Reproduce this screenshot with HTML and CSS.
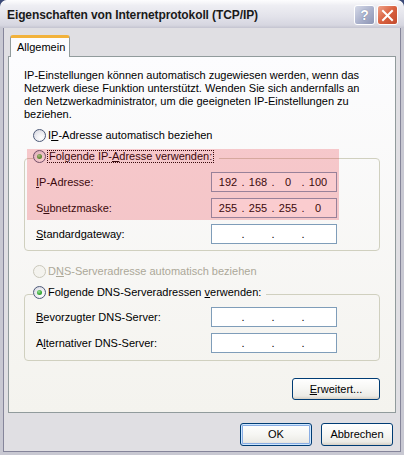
FILE: index.html
```html
<!DOCTYPE html>
<html lang="de">
<head>
<meta charset="utf-8">
<title>Eigenschaften von Internetprotokoll (TCP/IP)</title>
<link rel="stylesheet" href="styles.css">
</head>
<body>
<div class="window">
  <div class="titlebar">
    <span class="title">Eigenschaften von Internetprotokoll (TCP/IP)</span>
    <span class="tbtn help">?</span>
    <span class="tbtn close"><svg width="13" height="13" viewBox="0 0 13 13"><path d="M2 2 L11 11 M11 2 L2 11" stroke="#fff" stroke-width="2" stroke-linecap="square" fill="none"/></svg></span>
  </div>
  <div class="body">
    <div class="tabs"><div class="tab">Allgemein</div></div>
    <div class="panel">
      <div class="mark"></div>
      <p class="intro">IP-Einstellungen können automatisch zugewiesen werden, wenn das<br>Netzwerk diese Funktion unterstützt. Wenden Sie sich andernfalls an<br>den Netzwerkadministrator, um die geeigneten IP-Einstellungen zu<br>beziehen.</p>
      <div class="opt"><span class="radio"></span><span class="otext">I<u>P</u>-Adresse automatisch beziehen</span></div>
      <fieldset class="group">
        <legend class="opt"><span class="radio on"></span><span class="otext focus">Folgende IP-<u>A</u>dresse verwenden:</span></legend>
        <div class="rows">
          <div class="row"><span class="lbl"><u>I</u>P-Adresse:</span><span class="ip"><span>192</span><i>.</i><span>168</span><i>.</i><span>0</span><i>.</i><span>100</span></span></div>
          <div class="row"><span class="lbl">S<u>u</u>bnetzmaske:</span><span class="ip"><span>255</span><i>.</i><span>255</span><i>.</i><span>255</span><i>.</i><span>0</span></span></div>
          <div class="row"><span class="lbl"><u>S</u>tandardgateway:</span><span class="ip"><span></span><i>.</i><span></span><i>.</i><span></span><i>.</i><span></span></span></div>
        </div>
      </fieldset>
      <div class="opt dns-auto disabled"><span class="radio"></span><span class="otext">D<u>N</u>S-Serveradresse automatisch beziehen</span></div>
      <fieldset class="group">
        <legend class="opt"><span class="radio on"></span><span class="otext nofocus">Folgende DNS-Serveradressen <u>v</u>erwenden:</span></legend>
        <div class="rows rows2">
          <div class="row"><span class="lbl"><u>B</u>evorzugter DNS-Server:</span><span class="ip"><span></span><i>.</i><span></span><i>.</i><span></span><i>.</i><span></span></span></div>
          <div class="row"><span class="lbl">A<u>l</u>ternativer DNS-Server:</span><span class="ip"><span></span><i>.</i><span></span><i>.</i><span></span><i>.</i><span></span></span></div>
        </div>
      </fieldset>
      <div class="adv"><span class="btn wide"><u>E</u>rweitert...</span></div>
    </div>
    <div class="actions">
      <span class="btn default">OK</span>
      <span class="btn">Abbrechen</span>
    </div>
  </div>
</div>
</body>
</html>
```

FILE: styles.css
```css
html, body {
  margin: 0;
  padding: 0;
  background: #3b4a78;
}
.window {
  width: 404px;
  height: 455px;
  display: flex;
  flex-direction: column;
  font-family: "Liberation Sans", Arial, sans-serif;
  font-size: 11px;
  color: #000;
  background: #E0DFE3;
  border-radius: 7px 7px 0 0;
  overflow: hidden;
}
.titlebar {
  flex: none;
  height: 28px;
  box-sizing: border-box;
  padding: 2px 6px 0 7px;
  display: flex;
  align-items: center;
  gap: 2px;
  background: linear-gradient(#FDFDFE 0%, #EEEEF3 20%, #E2E2EA 60%, #D6D6E0 90%, #C4C4D0 100%);
  border-radius: 7px 7px 0 0;
}
.title {
  flex: 1;
  font-weight: bold;
  font-size: 12px;
  color: #1a1a1a;
  white-space: nowrap;
  letter-spacing: -0.1px;
}
.tbtn {
  width: 21px;
  height: 20px;
  box-sizing: border-box;
  border: 1px solid #fff;
  border-radius: 3px;
  display: flex;
  align-items: center;
  justify-content: center;
}
.help {
  background: linear-gradient(135deg, #D5D9E8 0%, #A9B0CB 55%, #8D95B4 100%);
  color: #fff;
  font-weight: bold;
  font-size: 14px;
  text-shadow: 0 0 1px #55607f;
}
.close {
  background: linear-gradient(135deg, #EFA38A 0%, #D9603F 50%, #C24A2D 100%);
}
.body {
  flex: 1;
  border: 3px solid #C8C8D2;
  border-top: 0;
  box-shadow: inset 1px 0 #85859A, inset -1px 0 #85859A, inset 0 -1px #85859A;
  padding: 7px 5px 0 5px;
  display: flex;
  flex-direction: column;
}
.tabs {
  display: flex;
  padding-left: 2px;
  position: relative;
  z-index: 1;
}
.tab {
  width: 60px;
  height: 22px;
  box-sizing: border-box;
  margin-bottom: -1px;
  padding: 3px 0 0 6px;
  background: #FCFCFE;
  border: 1px solid #919B9C;
  border-top: 3px solid #F2B23B;
  border-bottom: 0;
  border-radius: 3px 3px 0 0;
  line-height: 13px;
}
.panel {
  position: relative;
  border: 1px solid #919B9C;
  background: linear-gradient(#FCFCFE, #F4F3EE);
  padding: 12px 15px 12px 15px;
  display: flex;
  flex-direction: column;
}
.mark {
  position: absolute;
  left: 18px;
  top: 92px;
  width: 312px;
  height: 71px;
  background: rgba(235, 40, 55, 0.24);
  pointer-events: none;
  z-index: 2;
}
.intro {
  margin: 0;
  line-height: 13px;
  white-space: nowrap;
}
.opt {
  display: flex;
  align-items: center;
  height: 13px;
  line-height: 13px;
  margin-top: 8px;
  padding-left: 9px;
}
.otext {
  margin-left: 2px;
}
.radio {
  width: 13px;
  height: 13px;
  box-sizing: border-box;
  border-radius: 50%;
  border: 1px solid #4D5A78;
  background: radial-gradient(circle at 65% 70%, #FFFFFF 0%, #F0F0F4 40%, #D2D3DC 100%);
  position: relative;
  flex: none;
}
.radio.on::after {
  content: "";
  position: absolute;
  left: 3px;
  top: 3px;
  width: 5px;
  height: 5px;
  border-radius: 50%;
  background: radial-gradient(circle at 40% 35%, #9BE39B 0%, #3EAE3E 50%, #1F8A1F 100%);
}
.disabled {
  color: #ACA899;
}
.disabled .radio {
  border-color: #CAC8BB;
  background: #F4F3EE;
}
.focus {
  border: 1px dotted #000;
  line-height: 11px;
  padding: 0 1px;
  margin-left: 1px;
}
.dns-auto {
  margin-top: 14px;
}
.group {
  margin: 8px 0 0 0;
  padding: 0;
  border: 1px solid #D0D0BF;
  border-radius: 4px;
  min-width: 0;
}
.group legend.opt {
  margin: 0 0 0 8px;
  padding: 0 5px 4px 0;
  height: 17px;
  box-sizing: border-box;
  align-items: flex-start;
  background: transparent;
}
.rows {
  display: flex;
  flex-direction: column;
  gap: 6px;
  padding: 5px 0 6px 11px;
}
.rows2 {
  padding-top: 4px;
  padding-bottom: 7px;
}
.row {
  display: flex;
  align-items: center;
  height: 20px;
}
.lbl {
  width: 175px;
  flex: none;
}
.ip {
  width: 126px;
  height: 20px;
  box-sizing: border-box;
  border: 1px solid #7F9DB9;
  background: #fff;
  display: flex;
  align-items: center;
  padding-left: 3px;
  line-height: 13px;
}
.ip span {
  width: 26px;
  text-align: center;
}
.ip i {
  font-style: normal;
  width: 4px;
  text-align: center;
}
.adv {
  display: flex;
  justify-content: flex-end;
  margin-top: 17px;
}
.btn {
  height: 23px;
  width: 72px;
  box-sizing: border-box;
  border: 1px solid #003C74;
  border-radius: 3px;
  background: linear-gradient(#FFFFFF 0%, #F6F6F3 50%, #ECEBE6 85%, #D6D0C5 100%);
  display: flex;
  align-items: center;
  justify-content: center;
  line-height: 13px;
}
.btn.wide {
  width: 88px;
  height: 22px;
}
.btn.default {
  box-shadow: inset 0 0 0 1px #CEE7FF, inset 0 0 0 2px #89ADE4;
}
.actions {
  display: flex;
  justify-content: flex-end;
  gap: 9px;
  margin-top: 10px;
  padding-right: 3px;
}
```
